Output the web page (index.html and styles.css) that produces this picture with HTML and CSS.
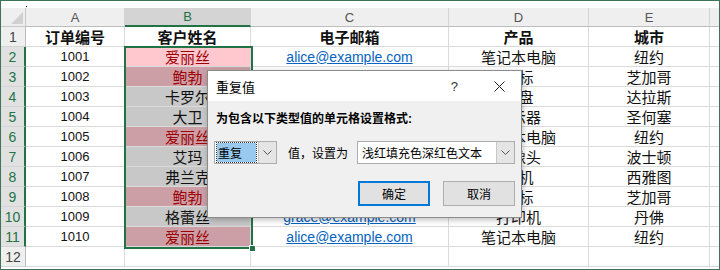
FILE: index.html
```html
<!DOCTYPE html>
<html lang="zh-CN">

<head>
    <meta charset="UTF-8">
    <title>重复值</title>
    <link rel="stylesheet" href="styles.css">
</head>

<body>
    <div class="window">
        <div class="topstrip"><span class="dot"></span></div>
        <div class="sheet">
            <div class="corner"><span class="tri"></span></div>
            <div class="ch">A</div>
            <div class="ch sel">B</div>
            <div class="ch">C</div>
            <div class="ch">D</div>
            <div class="ch">E</div>
            <div class="ch last"></div>

            <div class="rh">1</div>
            <div class="c hd">订单编号</div>
            <div class="c hd">客户姓名</div>
            <div class="c hd">电子邮箱</div>
            <div class="c hd">产品</div>
            <div class="c hd">城市</div>
            <div class="c last"></div>

            <div class="rh sel">2</div>
            <div class="c num">1001</div>
            <div class="c dup active">爱丽丝</div>
            <div class="c"><a href="#">alice@example.com</a></div>
            <div class="c">笔记本电脑</div>
            <div class="c">纽约</div>
            <div class="c last"></div>

            <div class="rh sel">3</div>
            <div class="c num">1002</div>
            <div class="c dup">鲍勃</div>
            <div class="c"><a href="#">bob@example.com</a></div>
            <div class="c">鼠标</div>
            <div class="c">芝加哥</div>
            <div class="c last"></div>

            <div class="rh sel">4</div>
            <div class="c num">1003</div>
            <div class="c uniq">卡罗尔</div>
            <div class="c"><a href="#">carol@example.com</a></div>
            <div class="c">硬盘</div>
            <div class="c">达拉斯</div>
            <div class="c last"></div>

            <div class="rh sel">5</div>
            <div class="c num">1004</div>
            <div class="c uniq">大卫</div>
            <div class="c"><a href="#">david@example.com</a></div>
            <div class="c">显示器</div>
            <div class="c">圣何塞</div>
            <div class="c last"></div>

            <div class="rh sel">6</div>
            <div class="c num">1005</div>
            <div class="c dup">爱丽丝</div>
            <div class="c"><a href="#">alice@example.com</a></div>
            <div class="c">笔记本电脑</div>
            <div class="c">纽约</div>
            <div class="c last"></div>

            <div class="rh sel">7</div>
            <div class="c num">1006</div>
            <div class="c uniq">艾玛</div>
            <div class="c"><a href="#">emma@example.com</a></div>
            <div class="c">摄像头</div>
            <div class="c">波士顿</div>
            <div class="c last"></div>

            <div class="rh sel">8</div>
            <div class="c num">1007</div>
            <div class="c uniq">弗兰克</div>
            <div class="c"><a href="#">frank@example.com</a></div>
            <div class="c">耳机</div>
            <div class="c">西雅图</div>
            <div class="c last"></div>

            <div class="rh sel">9</div>
            <div class="c num">1008</div>
            <div class="c dup">鲍勃</div>
            <div class="c"><a href="#">bob@example.com</a></div>
            <div class="c">鼠标</div>
            <div class="c">芝加哥</div>
            <div class="c last"></div>

            <div class="rh sel">10</div>
            <div class="c num">1009</div>
            <div class="c uniq">格蕾丝</div>
            <div class="c"><a href="#">grace@example.com</a></div>
            <div class="c">打印机</div>
            <div class="c">丹佛</div>
            <div class="c last"></div>

            <div class="rh sel">11</div>
            <div class="c num">1010</div>
            <div class="c dup">爱丽丝</div>
            <div class="c"><a href="#">alice@example.com</a></div>
            <div class="c">笔记本电脑</div>
            <div class="c">纽约</div>
            <div class="c last"></div>

            <div class="rh">12</div>
            <div class="c"></div>
            <div class="c"></div>
            <div class="c"></div>
            <div class="c"></div>
            <div class="c"></div>
            <div class="c last"></div>
        </div>

        <!-- B2:B11 选区 -->
        <div class="selection"><span class="handle"></span></div>

        <div class="dialog">
            <div class="titlebar">
                <span class="title">重复值</span>
                <span class="help">?</span>
                <span class="close">
                    <svg width="11" height="11" viewBox="0 0 11 11">
                        <path d="M0.5 0.5 L10.5 10.5 M10.5 0.5 L0.5 10.5" stroke="#222" stroke-width="1" fill="none" />
                    </svg>
                </span>
            </div>
            <div class="body">
                <div class="label">为包含以下类型值的单元格设置格式:</div>
                <div class="row">
                    <div class="combo small">
                        <span class="value"><span class="picked">重复</span></span>
                        <span class="drop">
                            <svg width="9" height="5" viewBox="0 0 9 5">
                                <path d="M0.5 0.5 L4.5 4.5 L8.5 0.5" stroke="#555" stroke-width="1" fill="none" />
                            </svg>
                        </span>
                    </div>
                    <span class="mid">值，设置为</span>
                    <div class="combo wide">
                        <span class="value">浅红填充色深红色文本</span>
                        <span class="drop">
                            <svg width="9" height="5" viewBox="0 0 9 5">
                                <path d="M0.5 0.5 L4.5 4.5 L8.5 0.5" stroke="#555" stroke-width="1" fill="none" />
                            </svg>
                        </span>
                    </div>
                </div>
                <div class="buttons">
                    <button class="btn primary">确定</button>
                    <button class="btn">取消</button>
                </div>
            </div>
        </div>
    </div>
</body>

</html>
```

FILE: styles.css
```css
* {
    margin: 0;
    padding: 0;
    box-sizing: border-box;
}

body {
    font-family: "Liberation Sans", "Noto Sans CJK SC", sans-serif;
    background: #fff;
}

.window {
    position: relative;
    width: 720px;
    height: 270px;
    border: 1px solid #40725b;
    overflow: hidden;
    background: #fff;
}

.topstrip {
    position: relative;
    height: 7px;
}

.dot {
    position: absolute;
    left: 25px;
    top: 5px;
    width: 1px;
    height: 1px;
    background: #000;
}

.sheet {
    display: grid;
    grid-template-columns: 25px 99px 126px 198px 140px 121px 1fr;
    grid-template-rows: 19px repeat(12, 20px);
}

.corner {
    position: relative;
    background: #efefef;
    border-right: 1px solid #c8c8c8;
    border-bottom: 1px solid #c8c8c8;
}

.tri {
    position: absolute;
    right: 2px;
    bottom: 2px;
    width: 0;
    height: 0;
    border-left: 12px solid transparent;
    border-bottom: 12px solid #d0d0d0;
}

.ch {
    display: flex;
    align-items: center;
    justify-content: center;
    background: #efefef;
    color: #555;
    font-size: 13px;
    border-right: 1px solid #d4d4d4;
    border-bottom: 1px solid #bdbdbd;
}

.ch.sel {
    background: #d4d4d4;
    color: #217346;
    border-bottom: 2px solid #217346;
}

.ch.last {
    border-right: none;
}

.rh {
    display: flex;
    align-items: center;
    justify-content: center;
    background: #efefef;
    color: #444;
    font-size: 14px;
    border-right: 1px solid #bdbdbd;
    border-bottom: 1px solid #d4d4d4;
}

.rh.sel {
    background: #e1e1e1;
    color: #217346;
    border-right: 2px solid #217346;
}

.c {
    display: flex;
    align-items: center;
    justify-content: center;
    font-size: 15px;
    color: #111;
    border-right: 1px solid #dadada;
    border-bottom: 1px solid #dadada;
    white-space: nowrap;
    overflow: hidden;
}

.c.last {
    border-right: none;
}

.c.hd {
    font-weight: bold;
}

.c.num {
    font-size: 13px;
}

.c a {
    color: #0563c1;
    font-size: 14px;
}

.c.dup {
    background: #cb9fa5;
    color: #9c0006;
}

.c.dup.active {
    background: #ffc7ce;
}

.c.uniq {
    background: #c8c8c8;
}

.selection {
    position: absolute;
    left: 123px;
    top: 45px;
    width: 129px;
    height: 203px;
    border: 2px solid #217346;
}

.handle {
    position: absolute;
    right: -5px;
    bottom: -5px;
    width: 7px;
    height: 7px;
    background: #217346;
    border: 1px solid #fff;
}

.dialog {
    position: absolute;
    left: 206px;
    top: 69px;
    width: 315px;
    height: 148px;
    border: 1px solid #8c8c8c;
    background: #f0f0f0;
    box-shadow: 1px 2px 6px rgba(0, 0, 0, 0.25);
    font-size: 12px;
    color: #000;
}

.titlebar {
    display: flex;
    align-items: center;
    height: 30px;
    padding: 0 16px 0 8px;
    background: #fff;
}

.title {
    font-size: 13px;
    flex: 1;
}

.help {
    font-size: 13px;
    color: #333;
    margin-right: 36px;
}

.close {
    display: flex;
}

.body {
    display: flex;
    flex-direction: column;
    padding: 10px 6px 0 6px;
}

.label {
    font-weight: bold;
    padding-left: 2px;
    height: 16px;
    line-height: 16px;
}

.row {
    display: flex;
    align-items: center;
    margin-top: 14px;
}

.combo {
    display: flex;
    flex-shrink: 0;
    height: 23px;
    background: #fff;
    border: 1px solid #adadad;
}

.combo.small {
    width: 63px;
}

.combo.wide {
    width: 158px;
}

.value {
    flex: 1;
    display: flex;
    align-items: center;
    padding: 1px 2px;
    white-space: nowrap;
    overflow: hidden;
}

.combo.wide .value {
    padding-left: 4px;
}

.picked {
    display: flex;
    align-items: center;
    width: 100%;
    height: 100%;
    padding-left: 1px;
    background: #99c9ef;
    outline: 1px dotted #333;
}

.drop {
    display: flex;
    align-items: center;
    justify-content: center;
    width: 18px;
    background: #e5e5e5;
    border-left: 1px solid #c8c8c8;
}

.mid {
    flex-shrink: 0;
    width: 60px;
    margin: 0 9px 0 11px;
    white-space: nowrap;
}

.buttons {
    display: flex;
    justify-content: flex-end;
    gap: 13px;
    margin-top: 17px;
}

.btn {
    width: 72px;
    height: 25px;
    font: inherit;
    background: #e1e1e1;
    border: 1px solid #adadad;
}

.btn.primary {
    border: 2px solid #0078d7;
}
```
